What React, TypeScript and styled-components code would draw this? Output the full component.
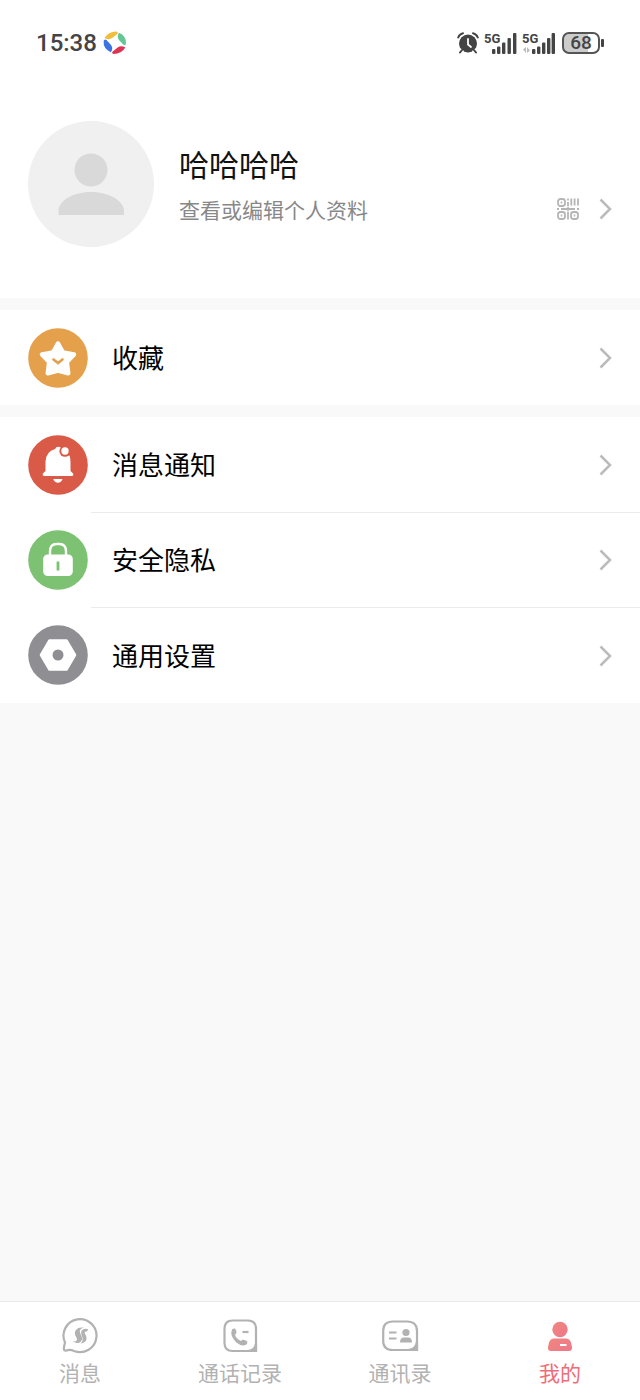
import React from 'react';
import styled, { createGlobalStyle } from 'styled-components';

const GlobalStyle = createGlobalStyle`
  *, *::before, *::after { box-sizing: border-box; }
  body {
    margin: 0;
    background: #f9f9f9;
    font-family: "Noto Sans CJK SC", sans-serif;
    color: #000;
  }
  svg { display: block; flex: none; }
`;

const Screen = styled.div`
  display: flex;
  flex-direction: column;
  min-height: 100vh;
`;

const StatusBar = styled.header`
  display: flex;
  align-items: center;
  justify-content: space-between;
  height: 86px;
  padding: 0 36px;
  background: #fff;
  color: #444;
  font-family: Roboto, sans-serif;
`;

const StatusGroup = styled.div`
  display: flex;
  align-items: center;
  gap: 6px;
`;

const Clock = styled.time`
  font-size: 24px;
  line-height: 28px;
  font-weight: 500;
`;

const Signal = styled.div`
  position: relative;
  width: 32px;
  height: 22px;
`;

const Network = styled.span`
  position: absolute;
  top: 0;
  left: -1px;
  font-size: 13px;
  line-height: 13px;
  font-weight: 700;
`;

const Battery = styled.div`
  display: flex;
  align-items: center;
  gap: 1px;
  margin-left: 1px;

  &::after {
    content: '';
    width: 3px;
    height: 8px;
    border-radius: 1px;
    background: #444;
  }
`;

const BatteryLevel = styled.span`
  width: 38px;
  height: 22px;
  border: 2px solid #555;
  border-radius: 7px;
  background: linear-gradient(90deg, #ccc 70%, #fff 70%);
  font-size: 19px;
  line-height: 18px;
  font-weight: 500;
  text-align: center;
`;

const Profile = styled.button`
  display: flex;
  align-items: center;
  gap: 25px;
  width: 100%;
  height: 212px;
  padding: 0 28px 16px;
  border: 0;
  background: #fff;
  color: inherit;
  font: inherit;
  text-align: left;
  cursor: pointer;
`;

const ProfileText = styled.span`
  display: flex;
  flex: 1;
  flex-direction: column;
  gap: 12px;
`;

const Name = styled.span`
  font-size: 30px;
  line-height: 38px;
  color: #111;
`;

const ProfileLine = styled.span`
  display: flex;
  align-items: center;
  justify-content: space-between;
  font-size: 21px;
  line-height: 30px;
  color: #888;
`;

const ProfileActions = styled.span`
  display: flex;
  align-items: center;
  gap: 20px;
`;

const Section = styled.section`
  margin-top: 12px;
  background: #fff;
`;

const Row = styled.button<{ $divided?: boolean }>`
  display: flex;
  align-items: center;
  gap: 3px;
  width: 100%;
  height: 95px;
  padding: 0 0 0 28px;
  border: 0;
  background: none;
  color: inherit;
  font: inherit;
  text-align: left;
  cursor: pointer;

  &:last-child:not(:first-child) {
    height: 96px;
  }
`;

const RowBody = styled.span<{ $divided?: boolean }>`
  display: flex;
  flex: 1;
  align-items: center;
  justify-content: space-between;
  align-self: stretch;
  padding: 0 28px 0 21px;
  border-top: ${(p) => (p.$divided ? '1px solid #ebebeb' : '0')};
`;

const RowLabel = styled.span`
  padding-bottom: 2px;
  font-size: 26px;
  line-height: 36px;
`;

const TabBar = styled.nav`
  display: grid;
  grid-template-columns: repeat(4, 1fr);
  height: 99px;
  margin-top: auto;
  border-top: 1px solid #e8e8e8;
  background: #fff;
`;

const Tab = styled.a<{ $active?: boolean }>`
  display: flex;
  flex-direction: column;
  align-items: center;
  gap: 2px;
  padding-top: 13px;
  color: ${(p) => (p.$active ? '#ee6d78' : '#b2b2b2')};
  font-size: 21px;
  line-height: 30px;
  text-decoration: none;
`;

const AppLogo = () => (
  <svg width="24" height="24" viewBox="0 0 24 24" aria-hidden="true">
    <path d="M1.500 7Q5.500.3 13.500.5q2.200.8.800 2.500L9.500 6.800Q6 9.600 1.500 7Z" fill="#f0bd3c" />
    <path d="M16 1.800q7.300 3.200 7 10.700-.8 2.700-2.800 1L16 9q-2.500-3.500 0-7.200Z" fill="#62c793" />
    <path d="M22.300 16.500q-3.500 6.300-11.800 6.600-2.200-.8-.8-2.500l5-4q3.400-2.700 7.600-.1Z" fill="#dc3452" />
    <path d="M7.800 21.300Q0 17.500.6 10q.9-2.500 2.900-1l4.500 5q2.500 3.500-.2 7.300Z" fill="#3d72e4" />
  </svg>
);

const AlarmIcon = () => (
  <svg width="22" height="22" viewBox="0 0 22 22" fill="none" stroke="#444" strokeLinecap="round" aria-hidden="true">
    <circle cx="11" cy="11.500" r="9" fill="#444" stroke="none" />
    <path d="M1.200 5.500Q2.500 2 6 1.200M20.800 5.500Q19.500 2 16 1.200M5 18.500l-2 2M17 18.500l2 2" stroke="#fff" strokeWidth="4" />
    <path d="M1.200 5.500Q2.500 2 6 1.200M20.800 5.500Q19.500 2 16 1.200M5 18l-2 2.500M17 18l2 2.500" strokeWidth="2" />
    <circle cx="11" cy="12" r="8.300" fill="#444" stroke="none" />
    <path d="M11 7v5.500l3 2.500" stroke="#fff" strokeWidth="1.800" />
  </svg>
);

const SignalBars = ({ data }: { data?: boolean }) => (
  <svg width="32" height="22" viewBox="0 0 32 22" fill="#444" aria-hidden="true">
    <rect x={data ? 9 : 7} y="17" width="3.400" height="5" rx="1" />
    <rect x={data ? 14 : 12} y="14.500" width="3.400" height="7.500" rx="1" />
    <rect x={data ? 19 : 17} y="10.500" width="3.400" height="11.500" rx="1" />
    <rect x={data ? 24 : 22.500} y="6" width="3.400" height="16" rx="1" />
    <rect x={data ? 28.600 : 28} y="1" width="3.400" height="21" rx="1" />
    {data && <path d="M0 17.500l3-2.500v6M7 18.500l-3 2.500v-6" fill="#bbb" />}
  </svg>
);

const Avatar = () => (
  <svg width="126" height="126" viewBox="0 0 126 126" aria-hidden="true">
    <circle cx="63" cy="63" r="63" fill="#f0f0f0" />
    <circle cx="63" cy="49" r="16.500" fill="#d9d9d9" />
    <path d="M30.500 94v-5C32 78 47 71 63 71s31 7 33 18v5Z" fill="#d9d9d9" />
  </svg>
);

const QrIcon = () => (
  <svg width="22" height="22" viewBox="0 0 22 22" fill="none" stroke="#b5b5b5" strokeWidth="1.800" aria-hidden="true">
    <rect x="1" y="1" width="7" height="7" rx="2.500" />
    <rect x="1" y="14" width="7" height="7" rx="2.500" />
    <rect x="14" y="14" width="7" height="7" rx="2.500" />
    <path d="M3.700 4.500h1.600M3.700 17.500h1.600M16.700 17.500h1.600M11 .5v2M11 4v4M14.300.5v7M17.600.5v7M21 .5v7M0 11h2M4 11h14M20 11h2M11 14v7.500" />
    <path d="M11 8q.5 2.500 3 3-2.500.5-3 3-.5-2.500-3-3 2.500-.5 3-3Z" fill="#b5b5b5" stroke="none" />
  </svg>
);

const Chevron = () => (
  <svg width="13" height="22" viewBox="0 0 13 22" fill="none" stroke="#bbb" strokeWidth="2.500" aria-hidden="true">
    <path d="M1.500 1.500l9.500 9.500-9.500 9.500" />
  </svg>
);

const StarIcon = () => (
  <svg width="60" height="60" viewBox="0 0 60 60" aria-hidden="true">
    <circle cx="30" cy="30" r="29.800" fill="#e5a04c" />
    <path
      d="M30 15.500l5 9 11 1.900-7.200 7.600 1.400 11.200L30 42.500l-10.200 2.700L21.200 34 14 26.400l11-1.900Z"
      fill="#fff"
      stroke="#fff"
      strokeWidth="4.500"
      strokeLinejoin="round"
    />
    <path d="M25.500 31.500l4.500 3.500 4.500-3.500" fill="none" stroke="#e5a04c" strokeWidth="2.600" strokeLinecap="round" />
  </svg>
);

const BellIcon = () => (
  <svg width="60" height="60" viewBox="0 0 60 60" aria-hidden="true">
    <circle cx="30" cy="30" r="29.800" fill="#d95a47" />
    <path
      d="M17.500 36V26.500Q18 16.500 27 14q1-2.200 3.500-2.200T34 14q8.500 2.500 8.500 12.500V36l2.600 2.600q.8 2.200-1.200 2.400H16q-1.900-.2-1.200-2.400Z"
      fill="#fff"
    />
    <circle cx="37" cy="16.200" r="5.600" fill="#d95a47" />
    <circle cx="37" cy="16" r="3.700" fill="#fff" />
    <path d="M25.300 44h9.200q-1.200 3.800-4.600 3.800T25.300 44Z" fill="#fff" />
  </svg>
);

const LockIcon = () => (
  <svg width="60" height="60" viewBox="0 0 60 60" aria-hidden="true">
    <circle cx="30" cy="30" r="29.800" fill="#7cc272" />
    <path d="M22 26v-4.500q0-7.500 6.500-7.500h3q6.500 0 6.500 7.500V26" fill="none" stroke="#fff" strokeWidth="2.400" />
    <rect x="15.200" y="24.500" width="29.600" height="21.500" rx="4.500" fill="#fff" />
    <rect x="28.600" y="31.500" width="2.800" height="9" fill="#7cc272" />
  </svg>
);

const NutIcon = () => (
  <svg width="60" height="60" viewBox="0 0 60 60" aria-hidden="true">
    <circle cx="30" cy="30" r="29.800" fill="#8f8e93" />
    <path
      d="M21.500 15.500h17L47 30l-8.500 14.500h-17L13 30Z"
      fill="#fff"
      stroke="#fff"
      strokeWidth="2.500"
      strokeLinejoin="round"
    />
    <circle cx="30" cy="30" r="5.500" fill="#8f8e93" />
  </svg>
);

const MessageIcon = () => (
  <svg width="40" height="40" viewBox="0 0 40 40" fill="none" stroke="#b2b2b2" strokeWidth="2.200" aria-hidden="true">
    <path d="M5 27.500A16.500 16.500 0 1 1 14 36q-4-2-7.500-.6-2.800.8-2.600-1.700.2-3 1.100-6.200Z" strokeLinejoin="round" />
    <path
      d="M11.500 25q1.500 2 4 1.300 2.500-1 .8-4-2.800-4.200-.3-7.300 2.700-3.300 8-2.200-4.600.8-4.200 4 .3 1.500 1.500 3.700 2 4.500-1.300 6.700-4.500 2.600-8.500-2.200Z"
      fill="#b2b2b2"
      stroke="none"
    />
    <path
      d="M20.500 28.500q3-2.500 1.800-6.500l-1-3q-.8-4 2.800-5 2-.5 4.200.3l-1.300 2.200q-3.200-.6-2 2.200 3 5 .3 7.800-2 2-4.800 2Z"
      fill="#b2b2b2"
      stroke="none"
    />
  </svg>
);

const CallIcon = () => (
  <svg width="40" height="40" viewBox="0 0 40 40" fill="none" stroke="#b2b2b2" strokeWidth="2.200" aria-hidden="true">
    <path d="M12.500 5.500h15q8.500 0 8.500 8.500v22H12.500Q4.500 36 4.500 28V14q0-8.500 8-8.500Z" />
    <path d="M36 28v8h-8q7.500-1 8-8Z" fill="#b2b2b2" />
    <path
      d="M12 14.500q2.500-2.200 4 .5l.5 2q.2 1.600-1.500 2.600 1 4.400 6 6.500 1.700-1.800 3.500-1l2 1q2 1.700-.5 3.700-4 2.300-9.700-2.200Q9.500 20.500 12 14.500Z"
      fill="#b2b2b2"
      stroke="none"
    />
    <path d="M22.500 17h6" />
  </svg>
);

const ContactsIcon = () => (
  <svg width="40" height="40" viewBox="0 0 40 40" fill="none" stroke="#b2b2b2" strokeWidth="2.200" aria-hidden="true">
    <path d="M13 6.500h14q10 0 10 9.500v19H13Q3.200 35 3.200 26V16Q3.200 6.500 13 6.500Z" />
    <path d="M37 27v8h-9q8-.5 9-8Z" fill="#b2b2b2" />
    <path d="M9 17.500h7.500M9 23.500h7.500" />
    <circle cx="26" cy="17.500" r="3.600" fill="#b2b2b2" stroke="none" />
    <path d="M20 27.500q0-5 4-5h4q4 0 4 5Z" fill="#b2b2b2" stroke="none" />
  </svg>
);

const MineIcon = () => (
  <svg width="40" height="40" viewBox="0 0 40 40" aria-hidden="true">
    <defs>
      <linearGradient id="mine" x1="0" y1="0" x2="1" y2="1">
        <stop offset="0" stopColor="#f18680" />
        <stop offset="1" stopColor="#ee7888" />
      </linearGradient>
    </defs>
    <circle cx="20" cy="14.500" r="7.700" fill="url(#mine)" />
    <path d="M14 23.500h12q3.500 0 5 4l1 4.500q.3 4-3 4H11q-3.500 0-3-4l1-4.500q1.500-4 5-4Z" fill="url(#mine)" />
    <path d="M20 30h6.500" stroke="#fff" strokeWidth="2" />
  </svg>
);

const settings = [
  { label: '消息通知', Icon: BellIcon },
  { label: '安全隐私', Icon: LockIcon },
  { label: '通用设置', Icon: NutIcon },
];

const tabs = [
  { label: '消息', href: '#messages', Icon: MessageIcon },
  { label: '通话记录', href: '#calls', Icon: CallIcon },
  { label: '通讯录', href: '#contacts', Icon: ContactsIcon },
  { label: '我的', href: '#mine', Icon: MineIcon, active: true },
];

const MenuRow = ({ label, Icon, divided }: { label: string; Icon: React.FC; divided?: boolean }) => (
  <Row type="button">
    <Icon />
    <RowBody $divided={divided}>
      <RowLabel>{label}</RowLabel>
      <Chevron />
    </RowBody>
  </Row>
);

export default function App() {
  return (
    <>
      <GlobalStyle />
      <Screen>
        <StatusBar>
          <StatusGroup>
            <Clock>15:38</Clock>
            <AppLogo />
          </StatusGroup>
          <StatusGroup>
            <AlarmIcon />
            <Signal>
              <Network>5G</Network>
              <SignalBars />
            </Signal>
            <Signal>
              <Network>5G</Network>
              <SignalBars data />
            </Signal>
            <Battery>
              <BatteryLevel>68</BatteryLevel>
            </Battery>
          </StatusGroup>
        </StatusBar>
        <main>
          <Profile type="button">
            <Avatar />
            <ProfileText>
              <Name>哈哈哈哈</Name>
              <ProfileLine>
                查看或编辑个人资料
                <ProfileActions>
                  <QrIcon />
                  <Chevron />
                </ProfileActions>
              </ProfileLine>
            </ProfileText>
          </Profile>
          <Section>
            <MenuRow label="收藏" Icon={StarIcon} />
          </Section>
          <Section>
            {settings.map(({ label, Icon }, i) => (
              <MenuRow key={label} label={label} Icon={Icon} divided={i > 0} />
            ))}
          </Section>
        </main>
        <TabBar>
          {tabs.map(({ label, href, Icon, active }) => (
            <Tab key={label} href={href} $active={active} aria-current={active ? 'page' : undefined}>
              <Icon />
              {label}
            </Tab>
          ))}
        </TabBar>
      </Screen>
    </>
  );
}
